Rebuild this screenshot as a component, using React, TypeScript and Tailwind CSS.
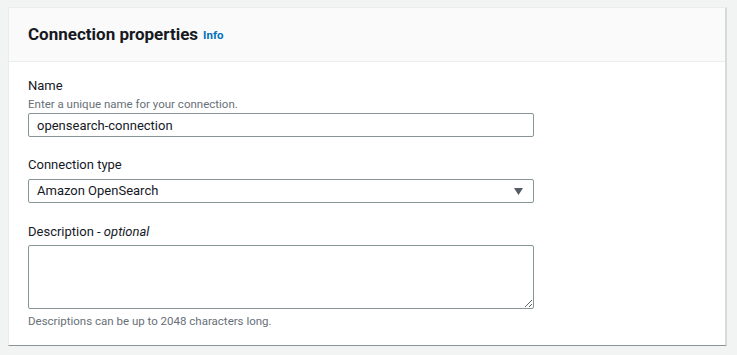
import { useState } from "react";

function Label({ children }: { children: React.ReactNode }) {
  return <label className="block text-[13px] leading-[20px] text-[#16191f]">{children}</label>;
}

export default function App() {
  const [name, setName] = useState("opensearch-connection");
  return (
    <div
      className="min-h-[355px] w-[737px] bg-[#f2f3f3] pl-[8px] pr-[10px] pt-[7px] pb-[8px]"
      style={{ fontFamily: 'Roboto, "Noto Sans", Arial, sans-serif' }}
    >
      <div className="bg-white border-t border-l border-[#eaeded] border-r-2 border-r-[#d5dbdb] border-b border-b-[#879596]">
        <div className="bg-[#fafafa] border-b border-[#eaeded] h-[54px] flex items-center px-[19px]">
          <h2 className="text-[17px] font-bold text-[#16191f]">Connection properties</h2>
          <a className="ml-[5px] mt-[3px] text-[11.5px] font-bold text-[#0073bb]">Info</a>
        </div>
        <div className="px-[19px] pt-[14px] pb-[16px]">
          <Label>Name</Label>
          <span className="block text-[11.5px] leading-[16px] text-[#687078]">Enter a unique name for your connection.</span>
          <input
            value={name}
            onChange={(e) => setName(e.target.value)}
            className="block mt-[1px] w-[506px] h-[24px] border border-[#879596] rounded-[2px] px-[8px] text-[13px] text-[#16191f] outline-none"
          />

          <div className="mt-[18px]">
            <Label>Connection type</Label>
          </div>
          <div className="relative mt-[4px] w-[506px] h-[24px] border border-[#879596] rounded-[2px] px-[8px] flex items-center text-[13px] text-[#16191f]">
            Amazon OpenSearch
            <svg className="absolute right-[10px] top-[8px]" width="9" height="7" viewBox="0 0 9 7">
              <path d="M0 0h9L4.5 7z" fill="#545b64" />
            </svg>
          </div>

          <div className="mt-[19px]">
            <Label>
              Description - <i>optional</i>
            </Label>
          </div>
          <textarea className="block mt-[3px] w-[506px] h-[64px] border border-[#879596] rounded-[2px] px-[8px] text-[13px] outline-none resize-y" />
          <p className="mt-[4px] text-[11.5px] leading-[16px] text-[#687078]">
            Descriptions can be up to 2048 characters long.
          </p>
        </div>
      </div>
    </div>
  );
}
